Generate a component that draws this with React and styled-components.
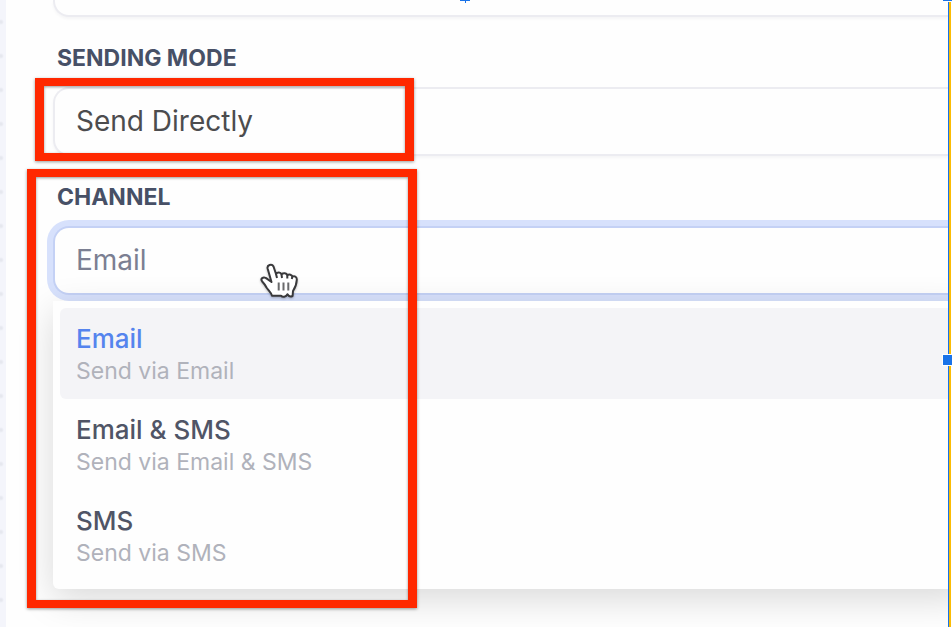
import React from 'react';
import styled, { createGlobalStyle } from 'styled-components';

const GlobalStyle = createGlobalStyle`
  * {
    box-sizing: border-box;
  }

  body {
    margin: 0;
    background: #fefefe;
    font-family: Inter, "Liberation Sans", sans-serif;
  }
`;

const Page = styled.div`
  position: relative;
  display: flex;
  min-height: 100vh;
  overflow: hidden;
`;

const Canvas = styled.div`
  flex: none;
  width: 6px;
  background: #f4f5fb radial-gradient(circle at 1px 22px, #e6e8ef 1px, transparent 3px) 0 0 / 6px 34px;
`;

const Form = styled.form`
  flex: 1;
  min-width: 0;
  display: flex;
  flex-direction: column;
  gap: 24px;
  padding-left: 47px;
  overflow: hidden;
`;

const Group = styled.div`
  position: relative;
  display: flex;
  flex-direction: column;
`;

const Label = styled.label`
  margin: 0 4px 12px;
  color: #475066;
  font-size: 23px;
  font-weight: 700;
  line-height: 34px;
`;

const fieldStyles = `
  display: block;
  width: 100%;
  height: 69px;
  margin: 0;
  padding: 0 21px 2px;
  border: 2px solid #ececf1;
  border-right: 0;
  border-radius: 16px 0 0 16px;
  outline: 0;
  background: #fefefe;
  box-shadow: 0 2px 3px rgba(30, 30, 60, 0.04);
  font-family: inherit;
  font-size: 28px;
  line-height: 34px;
`;

const PreviousInput = styled.input`
  ${fieldStyles}
  height: 17px;
  border-top: 0;
  border-radius: 0 0 0 16px;
`;

const Select = styled.select`
  ${fieldStyles}
  appearance: none;
  color: #4c4c4e;
`;

const ComboInput = styled.input`
  ${fieldStyles}
  border-color: #c4d1f5;
  box-shadow: 0 0 0 6px #d7e1fc;
  color: #7b7f92;

  &::placeholder {
    color: #7b7f92;
    opacity: 1;
  }
`;

const Menu = styled.ul`
  margin: 6px -20px 0 0;
  padding: 7px 0 8px 7px;
  border-radius: 0 0 0 6px;
  background: #fefefe;
  box-shadow: 0 10px 36px rgba(0, 0, 0, 0.15);
  list-style: none;
`;

const Option = styled.li`
  padding: 14px 16px 13px;
  border-radius: 6px 0 0 6px;
  background: ${(props) => (props.$active ? '#f4f4f7' : 'transparent')};
`;

const OptionTitle = styled.div`
  color: ${(props) => (props.$active ? '#5584ee' : '#505566')};
  font-size: 26px;
  font-weight: 500;
  line-height: 34px;
`;

const OptionText = styled.div`
  color: #b0b2bb;
  font-size: 23px;
  line-height: 30px;
`;

// red marker drawn around a group
const Marker = styled.div`
  position: absolute;
  top: ${(props) => props.$top}px;
  bottom: ${(props) => props.$bottom}px;
  left: ${(props) => props.$left}px;
  width: ${(props) => props.$width}px;
  border: solid #ff2800;
  border-width: 8px 9px;
  box-shadow: 0 1px 3px rgba(0, 0, 0, 0.4), inset 0 1px 3px rgba(0, 0, 0, 0.4);
  pointer-events: none;
`;

const Pointer = styled.svg`
  position: absolute;
  top: 80px;
  left: 205px;
  width: 44px;
  height: 40px;
  filter: drop-shadow(0 1px 1px rgba(0, 0, 0, 0.25));
`;

const Edge = styled.div`
  position: relative;
  flex: none;
  width: 3px;
  margin: 2px 1px 0 0;
  border-left: 1px solid #1a73e8;
  background: #fbbc04;
`;

const Handle = styled.span`
  position: absolute;
  top: 352px;
  left: -7px;
  width: 12px;
  height: 12px;
  border: 1px solid #ffffff;
  background: #1a73e8;
`;

const CornerHandle = styled.span`
  position: absolute;
  top: 0;
  right: 0;
  width: 9px;
  height: 1px;
  background: #1a73e8;
`;

const TopHandle = styled.svg`
  position: absolute;
  top: 0;
  left: 460px;
  width: 10px;
  height: 3px;
`;

const channels = [
  { title: 'Email', text: 'Send via Email' },
  { title: 'Email & SMS', text: 'Send via Email & SMS' },
  { title: 'SMS', text: 'Send via SMS' },
];

const HandPointer = () => (
  <Pointer viewBox="0 0 44 40" aria-hidden="true">
    <path
      d="M13.5 22 L9.6 8.5 C8.8 5 13.8 3.2 15.5 6.5 L18 14 C19.5 12 22.5 12.2 23.5 14.3 C25.5 12.6 28.5 13 29.3 15.2 C31.3 14 33.8 14.6 34.3 16.6 C36.8 15.6 39 17 38.8 19.8 C38.6 24 37.4 27.5 35 31 L34.6 36 C32.5 37 30.5 36 29.5 34.2 C28 37 24.5 37.4 23 35.8 L14 35.8 C13.4 32.5 10.5 30.5 8.5 27.5 C7 24.5 5.6 23 4.2 21.5 C2 18.6 5.3 16.5 7.8 18 C10 19.2 11.5 20.8 13.5 22 Z"
      fill="#fff"
      stroke="#39393b"
      strokeWidth="2"
      strokeLinejoin="round"
    />
    <path d="M18 14 L19 18 M23.5 14.3 L24 18 M29.3 15.2 L29.3 18.5 M34.3 16.6 L33.8 19" fill="none" stroke="#39393b" strokeWidth="2" />
    <path d="M20.7 22.5 V30.5 M25.5 22.5 V30.5 M30.3 22.5 V30.5" fill="none" stroke="#6a6a6c" strokeWidth="2" />
  </Pointer>
);

export default function App() {
  return (
    <React.Fragment>
      <GlobalStyle />
      <Page>
        <Canvas />
        <Form>
          <PreviousInput aria-label="Name" />

          <Group>
            <Label htmlFor="mode">SENDING MODE</Label>
            <Select id="mode" defaultValue="direct">
              <option value="direct">Send Directly</option>
            </Select>
            <Marker $top={37} $bottom={-5} $left={-18} $width={379} />
          </Group>

          <Group>
            <Label htmlFor="channel">CHANNEL</Label>
            <ComboInput id="channel" role="combobox" aria-expanded="true" aria-controls="channel-list" placeholder="Email" />
            <Menu id="channel-list" role="listbox">
              {channels.map((channel, i) => (
                <Option key={channel.title} role="option" aria-selected={i === 0} $active={i === 0}>
                  <OptionTitle $active={i === 0}>{channel.title}</OptionTitle>
                  <OptionText>{channel.text}</OptionText>
                </Option>
              ))}
            </Menu>
            <Marker $top={-11} $bottom={-19} $left={-26} $width={390} />
            <HandPointer />
          </Group>
        </Form>
        <Edge>
          <Handle />
        </Edge>
        <CornerHandle />
        <TopHandle viewBox="0 0 10 3" aria-hidden="true">
          <path d="M0 0 H10 V1 H6 V3 H5 V1 H0 Z" fill="#1a73e8" />
        </TopHandle>
      </Page>
    </React.Fragment>
  );
}
